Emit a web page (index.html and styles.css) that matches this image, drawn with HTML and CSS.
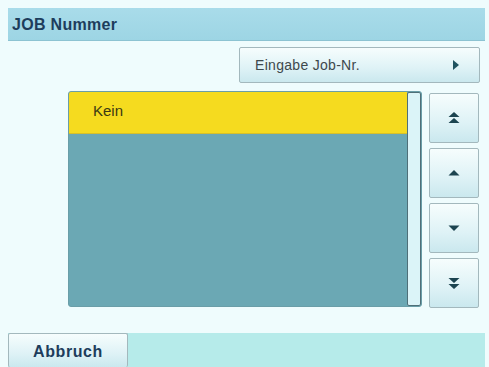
FILE: index.html
```html
<!DOCTYPE html>
<html lang="de">
  <head>
    <meta charset="UTF-8" />
    <meta name="viewport" content="width=device-width, initial-scale=1.0" />
    <title>JOB Nummer</title>
    <link rel="stylesheet" href="styles.css">
  </head>
  <body>
    <div class="screen">
      <!-- title -->
      <div class="titlebar">JOB Nummer</div>

      <div class="content">
        <div class="top-row">
          <button class="btn btn-entry">
            <span>Eingabe Job-Nr.</span>
            <svg width="8" height="10" viewBox="0 0 8 10"><path d="M1 0 L7 5 L1 10 Z" fill="#1f5360"/></svg>
          </button>
        </div>

        <div class="main-row">
          <div class="list">
            <ul class="list-items">
              <li class="item selected">Kein</li>
            </ul>
            <div class="scrollbar"></div>
          </div>

          <div class="nav">
            <button class="btn nav-btn">
              <svg width="12" height="12" viewBox="0 0 12 12"><path d="M6 0 L11.5 5 L0.5 5 Z M6 6 L11.5 11 L0.5 11 Z" fill="#1c4450"/></svg>
            </button>
            <button class="btn nav-btn">
              <svg width="12" height="6" viewBox="0 0 12 6"><path d="M6 0 L11.5 5.5 L0.5 5.5 Z" fill="#1c4450"/></svg>
            </button>
            <button class="btn nav-btn">
              <svg width="12" height="6" viewBox="0 0 12 6"><path d="M0.5 0.5 L11.5 0.5 L6 6 Z" fill="#1c4450"/></svg>
            </button>
            <button class="btn nav-btn">
              <svg width="12" height="12" viewBox="0 0 12 12"><path d="M0.5 1 L11.5 1 L6 6 Z M0.5 7 L11.5 7 L6 12 Z" fill="#1c4450"/></svg>
            </button>
          </div>
        </div>
      </div>

      <!-- footer -->
      <div class="footer">
        <button class="btn btn-cancel">Abbruch</button>
      </div>
    </div>
  </body>
</html>
```

FILE: styles.css
```css
*{
    padding: 0;
    margin: 0;
    box-sizing: border-box;
}
body{
    background: #effcfd;
    font-family: "Liberation Sans", Arial, sans-serif;
    width: 489px;
    height: 367px;
    overflow: hidden;
}
.screen{
    display: flex;
    flex-direction: column;
    height: 367px;
    padding: 8px 4px 0 8px;
}
.titlebar{
    height: 33px;
    background: linear-gradient(#a9dcea, #9dd5e4);
    border-bottom: 1px solid #8cc3d2;
    color: #1d3d5c;
    font-weight: bold;
    font-size: 16px;
    letter-spacing: 0.3px;
    padding: 8px 0 0 4px;
}
.content{
    flex: 1;
}
.btn{
    font-family: "Liberation Sans", Arial, sans-serif;
    background: linear-gradient(#f6fdfd, #def2f6 60%, #cae8ee);
    border: 1px solid #a3b8bd;
    border-radius: 2px;
    cursor: pointer;
}
.top-row{
    display: flex;
    padding: 6px 0 0 231px;
}
.btn-entry{
    width: 241px;
    height: 36px;
    display: flex;
    align-items: center;
    justify-content: space-between;
    padding: 0 19px 0 15px;
    font-size: 14px;
    letter-spacing: 0.3px;
    color: #3e484c;
}
.main-row{
    display: flex;
    gap: 7px;
    padding: 8px 0 0 60px;
}
.list{
    display: flex;
    width: 354px;
    height: 216px;
    background: #6ba8b4;
    border-radius: 3px;
    overflow: hidden;
    border: 1px solid #6a9ea8;
}
.list-items{
    list-style: none;
    flex: 1;
}
.item{
    height: 42px;
    padding: 10px 0 0 24px;
    font-size: 15px;
    color: #3b3a14;
}
.selected{
    background: #f5db1f;
    border-bottom: 1px solid #d6bf2a;
}
.scrollbar{
    width: 14px;
    background: #dbf4f8;
    border: 1px solid #4f6f78;
    border-radius: 2px;
}
.nav{
    display: flex;
    flex-direction: column;
    gap: 5px;
    padding-top: 2px;
}
.nav-btn{
    width: 50px;
    height: 50px;
    display: flex;
    align-items: center;
    justify-content: center;
}
.footer{
    height: 34px;
    background: #b6ebea;
    display: flex;
}
.btn-cancel{
    width: 120px;
    height: 34px;
    font-weight: bold;
    font-size: 16px;
    letter-spacing: 0.6px;
    color: #1d3d5c;
    border-bottom: none;
    padding-top: 2px;
}
```
